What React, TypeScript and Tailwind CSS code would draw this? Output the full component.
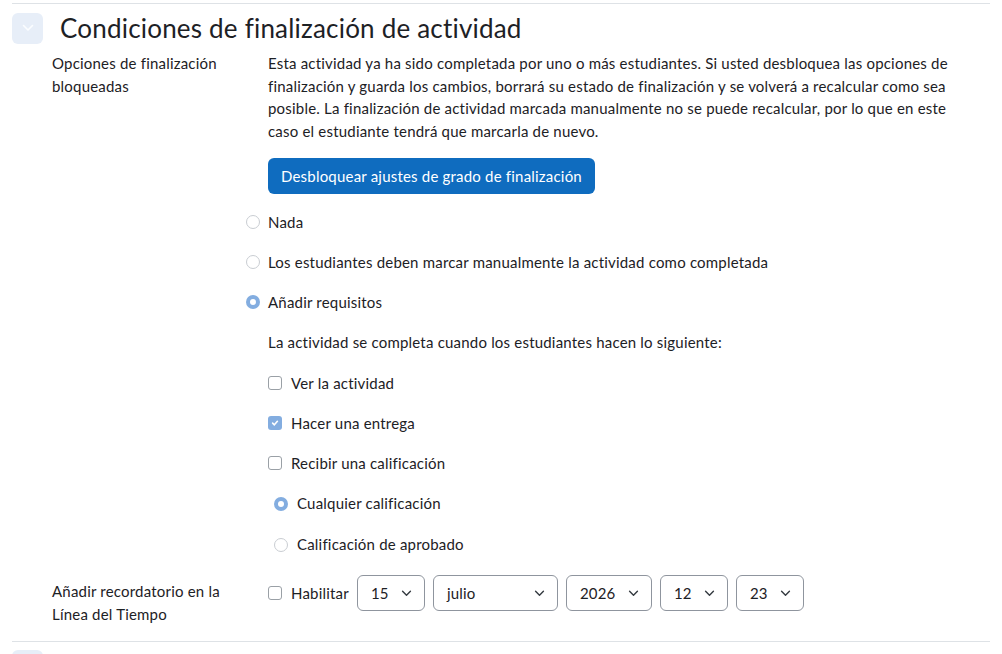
import React from "react";

const font = { fontFamily: "Lato, 'Noto Sans', sans-serif", letterSpacing: "0.2px" };

function Chevron({ className = "" }: { className?: string }) {
  return (
    <svg className={className} viewBox="0 0 12 8" fill="none" stroke="currentColor" strokeWidth="1.6" strokeLinecap="round" strokeLinejoin="round">
      <polyline points="1.5,1.5 6,6 10.5,1.5" />
    </svg>
  );
}

function Radio({ checked }: { checked?: boolean }) {
  return checked ? (
    <span className="grid h-[14px] w-[14px] shrink-0 place-items-center rounded-full bg-[#83ade0]">
      <span className="h-[6px] w-[6px] rounded-full bg-white" />
    </span>
  ) : (
    <span className="h-[14px] w-[14px] shrink-0 rounded-full border border-[#c9cdd2] bg-white" />
  );
}

function Check({ checked }: { checked?: boolean }) {
  return checked ? (
    <span className="grid h-[14px] w-[14px] shrink-0 place-items-center rounded-[3px] bg-[#83ade0]">
      <svg className="h-[8px] w-[8px]" viewBox="0 0 10 10" fill="none" stroke="white" strokeWidth="2" strokeLinecap="round" strokeLinejoin="round">
        <polyline points="2,5.2 4.2,7.3 8,2.8" />
      </svg>
    </span>
  ) : (
    <span className="h-[14px] w-[14px] shrink-0 rounded-[3px] border border-[#9aa0a6] bg-white" />
  );
}

function Select({ value, width }: { value: string; width: string }) {
  return (
    <div className={`flex h-[36px] items-center justify-between rounded-[6px] border border-[#8f959e] pl-[13px] pr-[12px] ${width}`}>
      <span>{value}</span>
      <Chevron className="h-[7px] w-[11px] text-[#343a40]" />
    </div>
  );
}

export default function App() {
  return (
    <div className="h-[654px] w-[1002px] overflow-hidden bg-white text-[15px] leading-[22.5px] text-[#1d2125]" style={font}>
      <section className="mx-[12px] mt-[3px] w-[978px] border-t border-[#dee2e6] pt-[8px]">
        <div className="flex items-center gap-[17px]">
          <div className="grid h-[31px] w-[31px] place-items-center rounded-[6px] bg-[#e7eef8]">
            <Chevron className="h-[8px] w-[12px] text-[#fbfdff]" />
          </div>
          <h3 className="text-[26px] leading-[32px] font-normal">Condiciones de finalización de actividad</h3>
        </div>

        <div className="mt-[8px] grid grid-cols-[256px_1fr]">
          <div className="pl-[40px]">
            Opciones de finalización
            <br />
            bloqueadas
          </div>
          <div>
            <p>
              Esta actividad ya ha sido completada por uno o más estudiantes. Si usted desbloquea las opciones de
              <br />
              finalización y guarda los cambios, borrará su estado de finalización y se volverá a recalcular como sea
              <br />
              posible. La finalización de actividad marcada manualmente no se puede recalcular, por lo que en este
              <br />
              caso el estudiante tendrá que marcarla de nuevo.
            </p>
            <button className="mt-[16px] h-[36px] rounded-[6px] bg-[#0f6cbf] px-[13px] text-white">
              Desbloquear ajustes de grado de finalización
            </button>
          </div>
        </div>

        <div className="mt-[8px] pl-[234px]">
          <div className="flex h-[40px] items-center gap-[8px]">
            <Radio />
            <span>Nada</span>
          </div>
          <div className="flex h-[40px] items-center gap-[8px]">
            <Radio />
            <span>Los estudiantes deben marcar manualmente la actividad como completada</span>
          </div>
          <div className="flex h-[40px] items-center gap-[8px]">
            <Radio checked />
            <span>Añadir requisitos</span>
          </div>
        </div>

        <div className="pl-[256px]">
          <div className="flex h-[41px] items-center">La actividad se completa cuando los estudiantes hacen lo siguiente:</div>
          <div className="flex h-[40px] items-center gap-[9px]">
            <Check />
            <span>Ver la actividad</span>
          </div>
          <div className="flex h-[40px] items-center gap-[9px]">
            <Check checked />
            <span>Hacer una entrega</span>
          </div>
          <div className="flex h-[40px] items-center gap-[9px]">
            <Check />
            <span>Recibir una calificación</span>
          </div>
          <div className="flex h-[41px] items-center gap-[9px] pl-[6px]">
            <Radio checked />
            <span>Cualquier calificación</span>
          </div>
          <div className="flex h-[41px] items-center gap-[9px] pl-[6px]">
            <Radio />
            <span>Calificación de aprobado</span>
          </div>
        </div>

        <div className="mt-[10px] grid grid-cols-[256px_1fr] pb-[16px]">
          <div className="pl-[40px] pt-[5px]">
            Añadir recordatorio en la
            <br />
            Línea del Tiempo
          </div>
          <div className="flex items-start gap-[8px]">
            <div className="flex h-[36px] items-center gap-[9px]">
              <Check />
              <span>Habilitar</span>
            </div>
            <Select value="15" width="w-[68px]" />
            <Select value="julio" width="w-[125px]" />
            <Select value="2026" width="w-[86px]" />
            <Select value="12" width="w-[68px]" />
            <Select value="23" width="w-[68px]" />
          </div>
        </div>
      </section>
      <div className="mx-[12px] w-[978px] border-t border-[#dee2e6] pt-[8px]">
        <div className="h-[31px] w-[31px] rounded-[6px] bg-[#e7eef8]" />
      </div>
    </div>
  );
}
